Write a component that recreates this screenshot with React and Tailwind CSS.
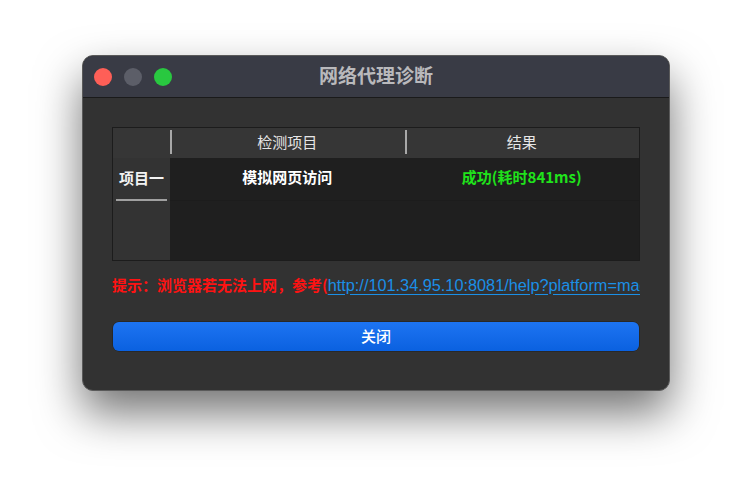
export default function App() {
  const font = { fontFamily: '"Noto Sans CJK SC", "Noto Sans", sans-serif' };
  return (
    <div className="w-[753px] h-[500px] bg-white overflow-hidden" style={font}>
      <div className="pt-[55px] pl-[82px]">
        <div className="w-[588px] h-[336px] rounded-[11px] bg-[#323232] border border-[#5a5a5a] shadow-[0_22px_45px_rgba(0,0,0,0.55)] overflow-hidden flex flex-col">
          <div className="h-[42px] shrink-0 bg-[#393b45] border-b border-[#1a1a1a] flex items-center relative">
            <div className="flex items-center gap-[12px] pl-[11px]">
              <div className="w-[18px] h-[18px] rounded-full bg-[#fe5f57]" />
              <div className="w-[18px] h-[18px] rounded-full bg-[#5c5e68]" />
              <div className="w-[18px] h-[18px] rounded-full bg-[#29c840]" />
            </div>
            <div className="absolute inset-0 flex items-center justify-center text-[19px] font-bold text-[#b9b9bc] pb-[2px]">
              网络代理诊断
            </div>
          </div>
          <div className="flex-1 px-[29px] pt-[29px] flex flex-col">
            <div className="h-[134px] border border-[#1c1c1c] bg-[#333333] flex flex-col">
              <div className="h-[30px] flex bg-[#363636]">
                <div className="w-[57px]" />
                <div className="flex-1 flex items-center relative">
                  <div className="absolute left-0 top-[2px] h-[24px] w-[2px] bg-[#a8a8a8]" />
                  <div className="flex-1 text-center text-[15px] leading-[20px] pb-[3px] text-[#e6e6e6]">检测项目</div>
                </div>
                <div className="flex-1 flex items-center relative">
                  <div className="absolute left-0 top-[2px] h-[24px] w-[2px] bg-[#a8a8a8]" />
                  <div className="flex-1 text-center text-[15px] leading-[20px] pb-[3px] text-[#e6e6e6]">结果</div>
                </div>
              </div>
              <div className="flex-1 flex">
                <div className="w-[57px] bg-[#333333] flex flex-col">
                  <div className="h-[43px] flex items-center justify-center relative pb-[3px]">
                    <span className="text-[15px] leading-[20px] font-bold text-[#f2f2f2]">项目一</span>
                    <div className="absolute left-[3px] right-[3px] bottom-[0px] h-[2px] bg-[#a0a0a0]" />
                  </div>
                </div>
                <div className="flex-1 bg-[#1f1f1f] flex flex-col">
                  <div className="h-[43px] flex border-b border-[#1c1c1c] pb-[4px]">
                    <div className="flex-1 flex items-center justify-center text-[15px] leading-[20px] font-bold text-white">模拟网页访问</div>
                    <div className="flex-1 flex items-center justify-center text-[15px] leading-[20px] font-bold text-[#1fe31b]">成功(耗时841ms)</div>
                  </div>
                </div>
              </div>
            </div>
            <div className="mt-[14px] h-[20px] flex items-center whitespace-nowrap overflow-hidden text-[15px] font-bold text-[#ff1212]">
              <span>提示：浏览器若无法上网，参考(</span>
              <span
                className="text-[#1b8fe6] font-normal text-[16.3px] underline decoration-2 underline-offset-[3px]"
                style={{ fontFamily: '"Liberation Sans", Arial, sans-serif' }}
              >
                http://101.34.95.10:8081/help?platform=mac
              </span>
            </div>
            <button className="mt-[27px] mx-[1px] h-[29px] rounded-[6px] bg-gradient-to-b from-[#1d74f2] to-[#0a61e0] text-white text-[15px] font-medium flex items-center justify-center shadow-[0_0_0_0.5px_rgba(0,0,0,0.4)]">
              关闭
            </button>
          </div>
        </div>
      </div>
    </div>
  );
}
